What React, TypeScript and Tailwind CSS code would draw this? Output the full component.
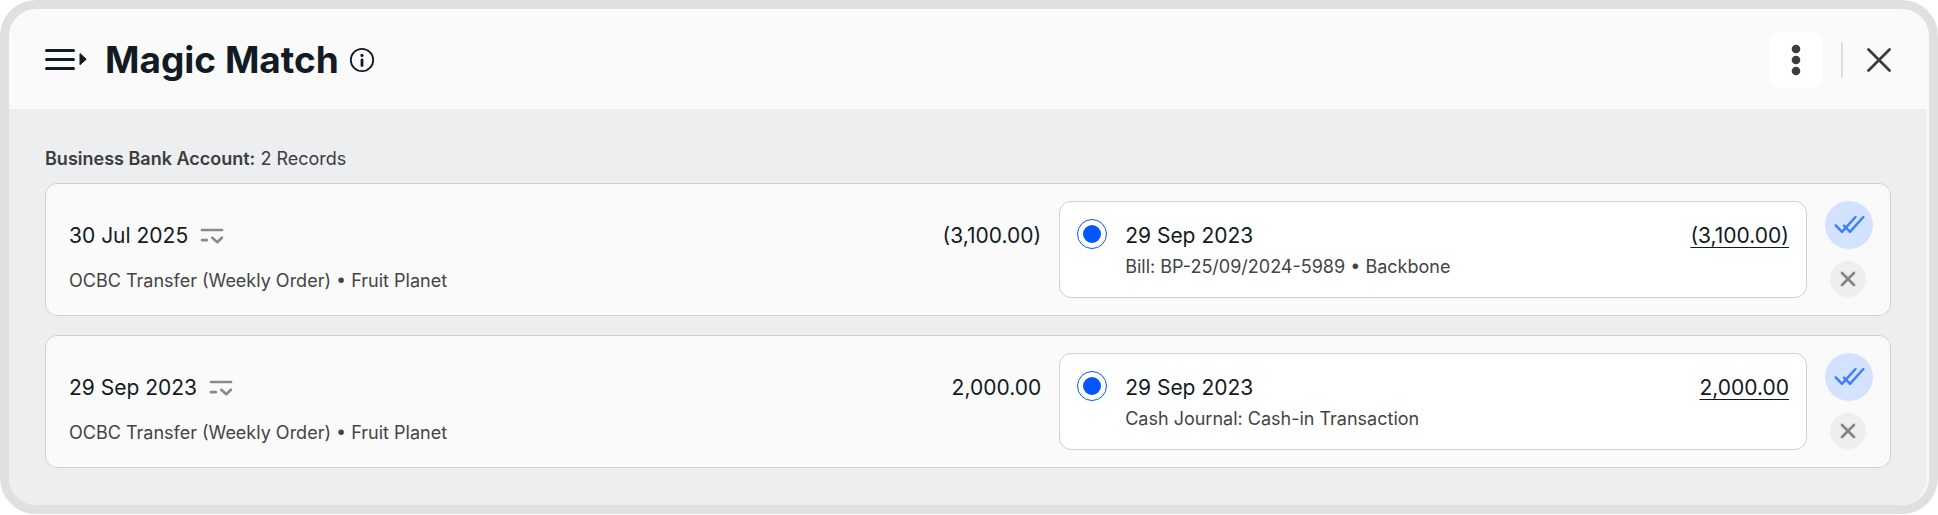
import React, { useState } from 'react';

interface MatchRecord {
    id: number;
    date: string;
    description: string;
    amount: string;
    matchDate: string;
    matchDescription: string;
    matchAmount: string;
}

const records: MatchRecord[] = [
    {
        id: 1,
        date: '30 Jul 2025',
        description: 'OCBC Transfer (Weekly Order) • Fruit Planet',
        amount: '(3,100.00)',
        matchDate: '29 Sep 2023',
        matchDescription: 'Bill: BP-25/09/2024-5989 • Backbone',
        matchAmount: '(3,100.00)',
    },
    {
        id: 2,
        date: '29 Sep 2023',
        description: 'OCBC Transfer (Weekly Order) • Fruit Planet',
        amount: '2,000.00',
        matchDate: '29 Sep 2023',
        matchDescription: 'Cash Journal: Cash-in Transaction',
        matchAmount: '2,000.00',
    },
];

const MenuIcon = () => (
    <svg width="42" height="24" viewBox="0 0 42 24" fill="none">
        <path d="M1.5 2.5h27M1.5 11.5h27M1.5 20.5h27" stroke="#121a23" strokeWidth="3" strokeLinecap="round" />
        <path d="M35 5.6v11.2l6.2-5.6z" fill="#121a23" stroke="#121a23" strokeWidth="1" strokeLinejoin="round" />
    </svg>
);

const InfoIcon = () => (
    <svg width="26" height="26" viewBox="0 0 26 26" fill="none">
        <circle cx="13" cy="13" r="11.2" stroke="#121a23" strokeWidth="1.8" />
        <circle cx="13" cy="8.4" r="1.6" fill="#121a23" />
        <path d="M13 13v5.6" stroke="#121a23" strokeWidth="2.8" strokeLinecap="round" />
    </svg>
);

const MoreIcon = () => (
    <svg width="10" height="32" viewBox="0 0 10 32" fill="#3b3d3f">
        <circle cx="5" cy="5" r="4.3" />
        <circle cx="5" cy="16" r="4.3" />
        <circle cx="5" cy="27" r="4.3" />
    </svg>
);

const CloseIcon = () => (
    <svg width="24" height="24" viewBox="0 0 24 24" fill="none">
        <path d="M1.5 1.5l21 21M22.5 1.5l-21 21" stroke="#3b3d3f" strokeWidth="2.8" strokeLinecap="round" />
    </svg>
);

const DetailsIcon = () => (
    <svg width="24" height="18" viewBox="0 0 24 18" fill="none" stroke="#8a8a8a" strokeWidth="2.7" strokeLinecap="round" strokeLinejoin="round">
        <path d="M2 3h20M2 13.2h4.8" />
        <path d="M12.3 10.8l5 4.4 4.6-4.4" />
    </svg>
);

const DoubleCheckIcon = () => (
    <svg width="48" height="48" viewBox="0 0 48 48" fill="none" stroke="#3f7ff5" strokeWidth="2.4" strokeLinecap="round" strokeLinejoin="round">
        <path d="M10.7 24.3l6.3 6.6 13.5-14.9" />
        <path d="M19 24.6l6 6.3 13.3-14.9" />
    </svg>
);

const RejectIcon = () => (
    <svg width="36" height="36" viewBox="0 0 36 36" fill="none">
        <path d="M12 12l12 12M24 12l-12 12" stroke="#858585" strokeWidth="2.7" strokeLinecap="round" />
    </svg>
);

const MatchRow = ({ record }: { record: MatchRecord }) => {
    const [selected, setSelected] = useState(true);
    const radioId = `match-${record.id}`;

    return (
        <li className="grid grid-cols-[13fr_10fr_auto] gap-[18px] rounded-xl border border-[#cdd0d7] bg-[#fafafa] py-[17px] pr-[17px] pl-[23px]">
            {/* Statement line */}
            <div className="flex justify-between pt-[18px]">
                <div>
                    <div className="flex items-center gap-3">
                        <span className="text-[21px] leading-[33px] text-[#121a23]">{record.date}</span>
                        <DetailsIcon />
                    </div>
                    <p className="mt-3.5 text-lg leading-[30px] text-[#444]">{record.description}</p>
                </div>
                <span className="text-[21px] leading-[33px] text-[#121a23]">{record.amount}</span>
            </div>

            {/* Suggested match */}
            <div className="flex gap-[18px] rounded-xl border border-[#cdd0d7] bg-white px-[17px] pt-[17px] pb-[15px]">
                <input
                    type="radio"
                    id={radioId}
                    name={radioId}
                    checked={selected}
                    onChange={() => setSelected(true)}
                    className="size-[30px] shrink-0 cursor-pointer appearance-none rounded-full border border-[#0057ff] bg-clip-content p-[5px] checked:bg-[#0057ff]"
                />
                <label htmlFor={radioId} className="flex-1 cursor-pointer">
                    <span className="block text-[21px] leading-[33px] text-[#121a23]">{record.matchDate}</span>
                    <span className="block text-lg leading-[30px] text-[#444]">{record.matchDescription}</span>
                </label>
                <a href="#" className="self-start text-[21px] leading-[33px] text-[#121a23] underline decoration-1 underline-offset-4 [text-decoration-skip-ink:none]">
                    {record.matchAmount}
                </a>
            </div>

            {/* Actions */}
            <div className="flex flex-col items-center gap-3">
                <button aria-label="Confirm match" className="cursor-pointer rounded-full bg-[#d3e2ff]">
                    <DoubleCheckIcon />
                </button>
                <button aria-label="Reject match" className="mr-0.5 cursor-pointer rounded-full bg-[#edeef0]">
                    <RejectIcon />
                </button>
            </div>
        </li>
    );
};

const App = () => {
    return (
        <main className="overflow-hidden rounded-[36px] border-[9px] border-[#e0e0e0] bg-[#fafafa] font-['Inter',sans-serif]">
            <header className="mr-0.5 flex items-center justify-between px-9 pt-6 pb-[22px]">
                <div className="flex items-center">
                    <button aria-label="Toggle menu" className="cursor-pointer">
                        <MenuIcon />
                    </button>
                    <h1 className="ml-[18px] text-[37px] leading-[54px] font-bold text-[#121a23]">Magic Match</h1>
                    <button aria-label="About Magic Match" className="ml-2.5 cursor-pointer">
                        <InfoIcon />
                    </button>
                </div>
                <div className="flex items-center gap-[18px]">
                    <button aria-label="More options" className="flex size-[54px] cursor-pointer items-center justify-center rounded-lg bg-white">
                        <MoreIcon />
                    </button>
                    <div className="h-9 w-0.5 bg-[#dcdee3]" />
                    <button aria-label="Close" className="ml-1.5 cursor-pointer">
                        <CloseIcon />
                    </button>
                </div>
            </header>

            <section className="mr-0.5 rounded-b-[27px] bg-[#edeef0] px-9 pt-[35px] pb-[37px]">
                <h2 className="mb-[9px] text-lg leading-[30px] font-normal text-[#3b3d3f]">
                    <span className="font-semibold">Business Bank Account:</span> 2 Records
                </h2>
                <ul className="flex flex-col gap-[19px]">
                    {records.map(record => (
                        <MatchRow key={record.id} record={record} />
                    ))}
                </ul>
            </section>
        </main>
    );
};

export default App;
